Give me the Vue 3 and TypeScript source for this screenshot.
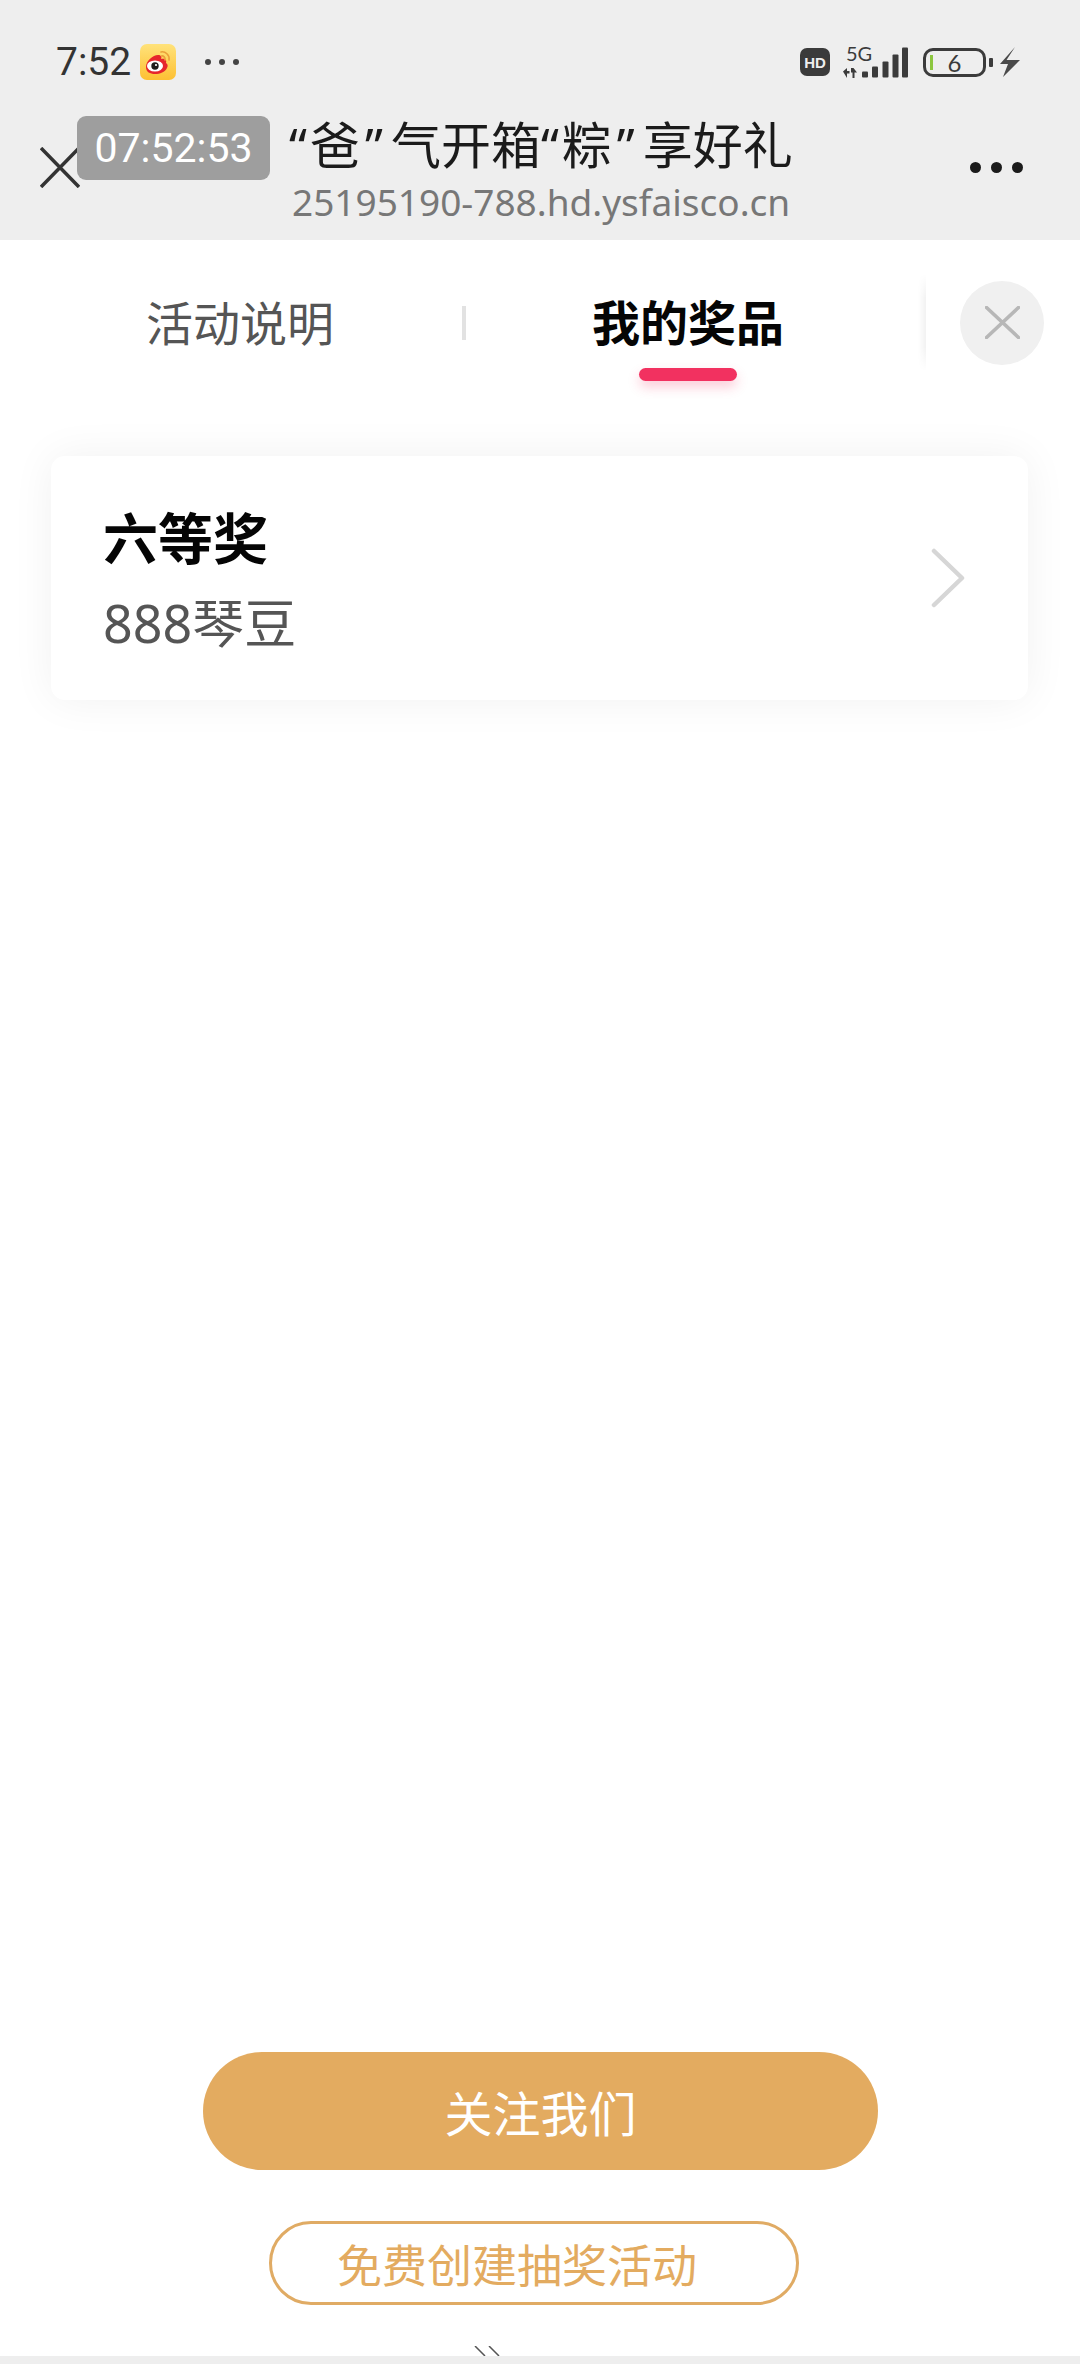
<script setup lang="ts">
import { ref } from 'vue';

// 当前选中的标签
const activeTab = ref('prize');

const tabs = [
  { key: 'rule', label: '活动说明' },
  { key: 'prize', label: '我的奖品' }
];

// 信号格
const signalBars = [
  { x: 19, h: 6 },
  { x: 29, h: 11 },
  { x: 39.5, h: 16 },
  { x: 49.5, h: 23 },
  { x: 59, h: 30 }
];
</script>

<template>
  <div class="page">
    <header class="browser-head">
      <div class="status-bar">
        <span class="time">7:52</span>
        <svg class="weibo" viewBox="0 0 36 36" width="36" height="36">
          <defs>
            <linearGradient id="wb-bg" x1="0" y1="0" x2="0" y2="1">
              <stop offset="0" stop-color="#ffe27a" />
              <stop offset="1" stop-color="#fdc033" />
            </linearGradient>
          </defs>
          <rect width="36" height="36" rx="7" fill="url(#wb-bg)" />
          <path d="M6 23c0-6 7-12 12-12 3 0 4 2 3 4 4-1 6 1 5 4 2 1 2 3 1 5-2 4-7 6-12 6-5 0-9-2-9-7z" fill="#e6252c" />
          <ellipse cx="15" cy="22" rx="8" ry="5.6" fill="#fff" />
          <circle cx="15" cy="22" r="3.7" fill="#1c1c1c" />
          <circle cx="16" cy="21" r="1.1" fill="#fff" />
          <path d="M21 8c4-1 9 3 8 8M21.500 12c2-.5 4 1.500 3.500 4" fill="none" stroke="#eb9f3a" stroke-width="1.600" stroke-linecap="round" />
        </svg>
        <span class="status-dots"><i></i><i></i><i></i></span>
        <div class="status-right">
          <span class="hd">HD</span>
          <div class="network">
            <span class="net-label">5G</span>
            <svg viewBox="0 0 66 31" width="66" height="31">
              <path d="M0 24.500 4 21v3h2.500v2.500H4V31zM8 21h2.500l3.500 4.500h-2.500V31H9.500v-5.500H8z" fill="#3b3b3b" />
              <rect v-for="bar in signalBars" :key="bar.x" :x="bar.x" :y="30.500 - bar.h" width="6" :height="bar.h" rx="1" fill="#3b3b3b" />
            </svg>
          </div>
          <div class="battery">
            <i class="battery-level"></i>
            <span>6</span>
            <b class="battery-cap"></b>
          </div>
          <svg class="bolt" viewBox="0 0 20 30" width="20" height="30">
            <path d="M15 0 6.500 13H20L3 30l5-13H0z" fill="#4a4a4a" />
          </svg>
        </div>
      </div>

      <div class="nav-bar">
        <svg class="nav-close" viewBox="0 0 40 41" width="40" height="41">
          <path d="M1 1l38 39M39 1 1 40" stroke="#333" stroke-width="3.500" fill="none" />
        </svg>
        <div class="nav-title">
          <div class="title"><span class="quote-open">“</span>爸<span class="quote-close">”</span>气开箱<span class="quote-open">“</span>粽<span class="quote-close">”</span>享好礼</div>
          <div class="domain">25195190-788.hd.ysfaisco.cn</div>
        </div>
        <span class="nav-more"><i></i><i></i><i></i></span>
      </div>
      <div class="timer">07:52:53</div>
    </header>

    <nav class="tabs">
      <div
        v-for="tab in tabs"
        :key="tab.key"
        class="tab"
        :class="[tab.key, { active: activeTab === tab.key }]"
      >
        {{ tab.label }}
      </div>
      <div class="tab-close">
        <span class="close-circle">
          <svg viewBox="0 0 35 33" width="35" height="33">
            <path d="M1.500 1.500l32 30M33.500 1.500l-32 30" stroke="#b7b7b7" stroke-width="3.600" stroke-linecap="round" fill="none" />
          </svg>
        </span>
      </div>
    </nav>

    <section class="prize-card">
      <div class="prize-info">
        <div class="prize-level">六等奖</div>
        <div class="prize-name">888琴豆</div>
      </div>
      <svg class="arrow" viewBox="0 0 34 60" width="34" height="60">
        <path d="M3 3l28 27L3 57" stroke="#d6d6d6" stroke-width="4.500" stroke-linecap="round" stroke-linejoin="round" fill="none" />
      </svg>
    </section>

    <div class="spacer"></div>

    <footer class="actions">
      <button class="follow-btn">关注我们</button>
      <button class="create-btn">免费创建抽奖活动</button>
    </footer>

    <div class="home-marks">
      <svg viewBox="0 0 28 10" width="28" height="10">
        <path d="M1 0l10 10M15 0l10 10" stroke="#555" stroke-width="1.500" fill="none" />
      </svg>
    </div>
    <div class="bottom-bar"></div>
  </div>
</template>

<style>
html,
body {
  margin: 0;
  background: #fff;
}
</style>

<style scoped>
.page {
  position: relative;
  display: flex;
  flex-direction: column;
  width: 1080px;
  height: 2364px;
  overflow: hidden;
  background: #fff;
  font-family: "Noto Sans", "Noto Sans CJK SC", sans-serif;
}

.browser-head {
  position: relative;
  height: 240px;
  background: #eeeeee;
}

.status-bar {
  display: flex;
  align-items: center;
  height: 124px;
  padding: 0 60px 0 56px;
}

.time {
  font-family: Roboto, sans-serif;
  font-size: 39px;
  color: #333;
}

.weibo {
  margin-left: 9px;
}

.status-dots {
  display: flex;
  gap: 8px;
  margin-left: 29px;
}

.status-dots i {
  width: 6px;
  height: 6px;
  border-radius: 50%;
  background: #444;
}

.status-right {
  display: flex;
  align-items: center;
  margin-left: auto;
}

.hd {
  display: flex;
  align-items: center;
  justify-content: center;
  width: 30px;
  height: 28px;
  border-radius: 7px;
  background: #3b3b3b;
  color: #eee;
  font-family: "Liberation Sans", sans-serif;
  font-size: 15px;
  font-weight: 700;
}

.network {
  position: relative;
  width: 66px;
  height: 31px;
  margin-left: 13px;
}

.network svg {
  display: block;
}

.net-label {
  position: absolute;
  left: 3px;
  top: -4px;
  font-family: Lato, sans-serif;
  font-size: 20px;
  line-height: 20px;
  color: #3b3b3b;
}

.battery {
  position: relative;
  display: flex;
  align-items: center;
  justify-content: center;
  box-sizing: border-box;
  width: 63px;
  height: 29px;
  margin-left: 14px;
  border: 3.500px solid #3b3b3b;
  border-radius: 10px;
  color: #3b3b3b;
  font-family: Lato, sans-serif;
  font-size: 24px;
}

.battery-level {
  position: absolute;
  left: 4px;
  top: 4px;
  width: 3px;
  height: 15px;
  background: #8cc63f;
}

.battery-cap {
  position: absolute;
  right: -10px;
  top: 7px;
  width: 4px;
  height: 9px;
  border-radius: 1px;
  background: #3b3b3b;
}

.bolt {
  margin-left: 14px;
}

.nav-bar {
  display: flex;
  align-items: flex-start;
  height: 116px;
  padding: 0 57px 0 40px;
}

.nav-close {
  margin-top: 23px;
}

.nav-title {
  margin-left: 209px;
}

.title {
  height: 50px;
  margin-top: -4px;
  font-size: 50px;
  line-height: 50px;
  color: #1b1b1b;
  white-space: nowrap;
}

.quote-open {
  letter-spacing: 3px;
}

.quote-close {
  margin-left: 5px;
  letter-spacing: 8px;
}

.domain {
  margin-top: 8px;
  margin-left: 3px;
  font-size: 37px;
  line-height: 48px;
  color: #777;
  white-space: nowrap;
}

.nav-more {
  display: flex;
  gap: 10px;
  margin-top: 38px;
  margin-left: auto;
}

.nav-more i {
  width: 11px;
  height: 11px;
  border-radius: 50%;
  background: #1b1b1b;
}

.timer {
  position: absolute;
  left: 77px;
  top: 116px;
  width: 193px;
  height: 64px;
  border-radius: 9px;
  background: #9e9e9e;
  color: #fff;
  font-family: Roboto, sans-serif;
  font-size: 41px;
  line-height: 64px;
  text-align: center;
}

.tabs {
  display: flex;
  align-items: center;
  height: 97px;
  margin-top: 34px;
}

.tab {
  position: relative;
  box-sizing: border-box;
  width: 462px;
  font-size: 47px;
  line-height: 60px;
  text-align: center;
  color: #555;
}

.tab.rule {
  width: 464px;
  padding-left: 16px;
}

.tab.rule::after {
  content: "";
  position: absolute;
  right: -2px;
  top: 13px;
  width: 4px;
  height: 34px;
  background: #e2e2e2;
}

.tab.prize {
  padding-right: 14px;
}

.tab.active {
  color: #050505;
  font-size: 48px;
  font-weight: 700;
}

.tab.active::after {
  content: "";
  position: absolute;
  left: 175px;
  bottom: -28px;
  width: 98px;
  height: 13px;
  border-radius: 7px;
  background: #f23160;
  box-shadow: 0 6px 12px rgba(242, 49, 96, 0.25);
}

.tab-close {
  position: relative;
  display: flex;
  align-items: center;
  flex: 1;
  align-self: stretch;
  padding-left: 34px;
}

.tab-close::before {
  content: "";
  position: absolute;
  left: -8px;
  top: 0;
  bottom: 0;
  width: 8px;
  background: linear-gradient(to right, rgba(0, 0, 0, 0), rgba(0, 0, 0, 0.05));
  -webkit-mask-image: linear-gradient(to bottom, transparent, #000 25%, #000 75%, transparent);
  mask-image: linear-gradient(to bottom, transparent, #000 25%, #000 75%, transparent);
}

.close-circle {
  display: flex;
  align-items: center;
  justify-content: center;
  width: 84px;
  height: 84px;
  border-radius: 50%;
  background: #f0f0f0;
}

.prize-card {
  display: flex;
  align-items: center;
  justify-content: space-between;
  box-sizing: border-box;
  width: 977px;
  height: 244px;
  margin: 85px 0 0 51px;
  padding: 0 63px 0 52px;
  border-radius: 14px;
  background: #fff;
  box-shadow: 0 0 44px rgba(0, 0, 0, 0.06);
}

.prize-level {
  font-size: 55px;
  line-height: 66px;
  font-weight: 700;
  color: #050505;
}

.prize-name {
  margin-top: 23px;
  font-size: 52px;
  line-height: 58px;
  color: #555;
}

.spacer {
  flex: 1;
}

.actions {
  display: flex;
  flex-direction: column;
  align-items: flex-start;
  padding-left: 203px;
}

.follow-btn,
.create-btn {
  font-family: inherit;
  padding: 0;
  white-space: nowrap;
}

.follow-btn {
  width: 675px;
  height: 118px;
  border: none;
  border-radius: 59px;
  background: #e3ab60;
  color: #fff;
  font-size: 48px;
}

.create-btn {
  box-sizing: border-box;
  width: 530px;
  height: 84px;
  margin: 51px 0 0 66px;
  padding-right: 34px;
  border: 3px solid #e0ab64;
  border-radius: 42px;
  background: #fff;
  color: #e3ab60;
  font-size: 45px;
}

.home-marks {
  height: 10px;
  margin-top: 41px;
  padding-left: 474px;
}

.home-marks svg {
  display: block;
}

.bottom-bar {
  height: 8px;
  background: #eeeeee;
}
</style>
